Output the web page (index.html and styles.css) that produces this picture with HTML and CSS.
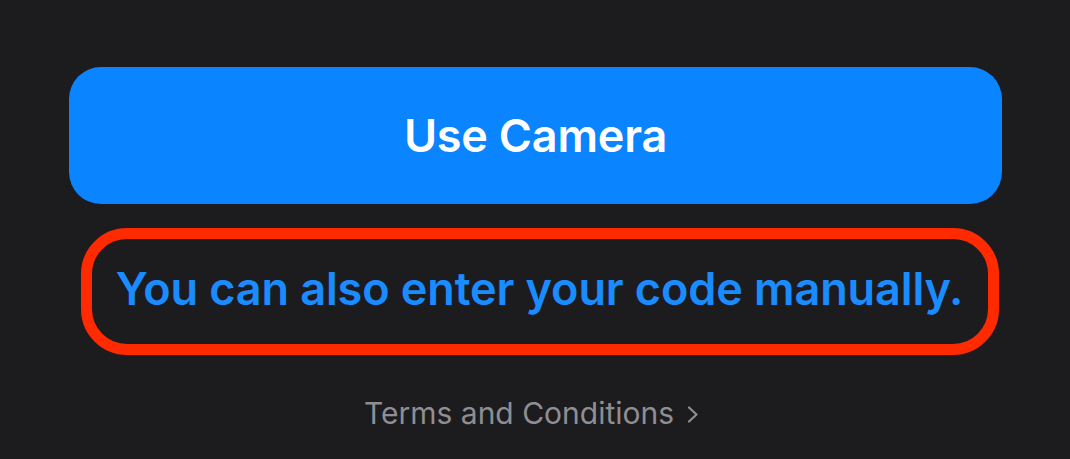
FILE: index.html
```html
<!DOCTYPE html>
<html lang="en">
  <head>
    <meta charset="UTF-8" />
    <meta name="viewport" content="width=device-width, initial-scale=1.0" />
    <title>Scan Code</title>
    <link rel="stylesheet" href="styles.css">
  </head>
  <body>
    <div class="screen">
      <button class="camera-btn">Use Camera</button>
      <div class="manual-box">
        <a class="manual-link">You can also enter your code manually.</a>
      </div>
      <a class="terms">
        Terms and Conditions
        <svg class="chevron" width="12" height="17" viewBox="0 0 12 17">
          <polyline points="2,1.5 9.5,8.5 2,15.5" fill="none" stroke="#8e8e93" stroke-width="2.2" stroke-linecap="round" stroke-linejoin="round" />
        </svg>
      </a>
    </div>
  </body>
</html>
```

FILE: styles.css
```css
html,
body {
  margin: 0;
  height: 100%;
  background-color: #1c1c1e;
}
.screen {
  display: flex;
  flex-direction: column;
  align-items: center;
  padding: 67px 68px 0 69px;
  font-family: Inter, "Liberation Sans", sans-serif;
}
.camera-btn {
  width: 100%;
  height: 137px;
  border: none;
  border-radius: 32px;
  background-color: #0a84ff;
  color: white;
  font-family: inherit;
  font-size: 45px;
  font-weight: 600;
  letter-spacing: -0.2px;
}
.manual-box {
  box-sizing: border-box;
  width: 918px;
  height: 127px;
  margin: 24px 0 0 8px;
  padding-bottom: 6px;
  border: 11px solid #ff2a00;
  border-radius: 46px;
  display: flex;
  align-items: center;
  justify-content: center;
}
.manual-link {
  color: #1a8cff;
  font-size: 45px;
  font-weight: 600;
  letter-spacing: -0.1px;
}
.terms {
  display: flex;
  align-items: center;
  gap: 13px;
  margin: 40px 8px 0 0;
  color: #8e8e93;
  font-size: 30px;
}
.chevron {
  margin-top: 2px;
}
```
